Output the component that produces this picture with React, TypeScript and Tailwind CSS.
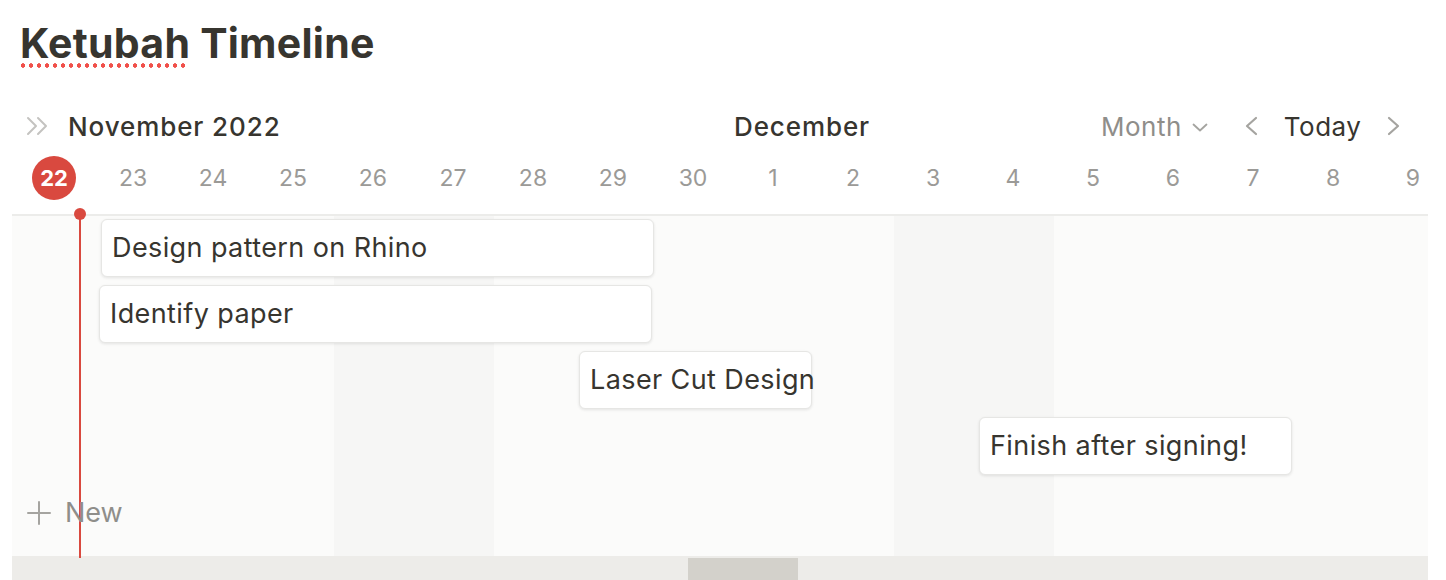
const days = ["22", "23", "24", "25", "26", "27", "28", "29", "30", "1", "2", "3", "4", "5", "6", "7", "8", "9"];

// columnas de fin de semana (26-27 nov, 3-4 dic)
const weekend = [4, 5, 11, 12];

type Task = { title: string; left: string; width: string };

const tasks: Task[] = [
  { title: "Design pattern on Rhino", left: "ml-[89px]", width: "w-[553px]" },
  { title: "Identify paper", left: "ml-[87px]", width: "w-[553px]" },
  { title: "Laser Cut Design", left: "ml-[567px]", width: "w-[233px]" },
  { title: "Finish after signing!", left: "ml-[967px]", width: "w-[313px]" },
];

function TaskCard({ task }: { task: Task }) {
  return (
    <div
      className={`${task.left} ${task.width} flex h-[58px] items-center overflow-visible whitespace-nowrap rounded-[6px] border border-[#e6e6e4] bg-white pl-[10px] text-[27px] tracking-[0.4px] text-[#37352f] shadow-[0_1px_3px_rgba(15,15,15,0.1)]`}
    >
      {task.title}
    </div>
  );
}

export default function App() {
  return (
    <div className="h-[580px] w-[1446px] overflow-hidden bg-white font-['Inter',sans-serif] text-[#37352f]">
      <div className="flex h-[100px] items-start pl-[20px] pt-[18px]">
        <h1 className="text-[41px] font-bold leading-[50px] tracking-[0.25px]">
          <span className="relative">
            Ketubah
            {/* subrayado del corrector ortográfico */}
            <span className="absolute left-[-1px] right-[3px] top-[45px] h-[5px] bg-[radial-gradient(circle,#f0504a_2px,transparent_2.4px)] bg-[length:8px_5px] bg-repeat-x" />
          </span>{" "}
          Timeline
        </h1>
      </div>

      {/* cabecera del mes */}
      <div className="flex h-[52px] items-center">
        <div className="flex w-[68px] shrink-0 items-center pl-[25px]">
          <svg width="26" height="20" viewBox="0 0 26 20" fill="none" stroke="#c4c3c0" strokeWidth="2" strokeLinecap="round" strokeLinejoin="round">
            <path d="M3 2l8 8-8 8M13 2l8 8-8 8" />
          </svg>
        </div>
        <span className="w-[666px] shrink-0 text-[26px] font-medium tracking-[0.9px]">November 2022</span>
        <span className="w-[367px] shrink-0 text-[26px] font-medium tracking-[0.9px]">December</span>
        <div className="flex items-center text-[26px] tracking-[0.5px] text-[#8f8e8a]">
          Month
          <svg className="ml-[10px] mt-[2px]" width="16" height="9" viewBox="0 0 16 9" fill="none" stroke="#a5a4a0" strokeWidth="1.8" strokeLinecap="round" strokeLinejoin="round">
            <path d="M1.5 1.5l6.5 6 6.5-6" />
          </svg>
        </div>
        <svg className="ml-[36px]" width="14" height="20" viewBox="0 0 14 20" fill="none" stroke="#a5a4a0" strokeWidth="2.2" strokeLinecap="round" strokeLinejoin="round">
          <path d="M12 2l-9 8 9 8" />
        </svg>
        <span className="ml-[26px] text-[26px] tracking-[0.5px]">Today</span>
        <svg className="ml-[26px]" width="14" height="20" viewBox="0 0 14 20" fill="none" stroke="#a5a4a0" strokeWidth="2.2" strokeLinecap="round" strokeLinejoin="round">
          <path d="M2 2l9 8-9 8" />
        </svg>
      </div>

      {/* fila de días */}
      <div className="ml-[13px] flex h-[62px] items-start pt-[4px]">
        {days.map((d, i) => (
          <div key={d + i} className="flex w-[80px] shrink-0 justify-center">
            {i === 0 ? (
              <span className="ml-[2px] flex h-[44px] w-[44px] items-center justify-center rounded-full bg-[#d9493f] text-[22px] font-bold text-white">
                {d}
              </span>
            ) : (
              <span className="flex h-[44px] items-center pt-[1px] text-[23px] text-[#9b9a97]">{d}</span>
            )}
          </div>
        ))}
      </div>

      {/* cuerpo del timeline */}
      <div className="relative ml-[12px] h-[342px] w-[1416px] border-t-2 border-[#ececea]">
        <div className="absolute inset-0 flex overflow-hidden">
          <div className="w-[2px] shrink-0 bg-[#fbfbfa]" />
          {days.map((d, i) => (
            <div
              key={d + i}
              className={`h-full w-[80px] shrink-0 ${weekend.includes(i) ? "bg-[#f6f6f5]" : "bg-[#fbfbfa]"}`}
            />
          ))}
        </div>

        <div className="absolute left-[67px] top-[-2px] h-[344px] w-[2px] bg-[#d9493f]" />
        <div className="absolute left-[62px] top-[-8px] h-[12px] w-[12px] rounded-full bg-[#d9493f]" />

        <div className="relative flex flex-col gap-[8px] pt-[3px]">
          {tasks.map((t) => (
            <TaskCard key={t.title} task={t} />
          ))}
        </div>

        <div className="relative mt-[18px] flex items-center pl-[14px] text-[27px] text-[#8f8e8a]">
          <svg width="26" height="26" viewBox="0 0 26 26" fill="none" stroke="#a5a4a0" strokeWidth="2" strokeLinecap="round">
            <path d="M13 2v22M2 13h22" />
          </svg>
          <span className="ml-[13px]">New</span>
        </div>
      </div>

      {/* barra de desplazamiento */}
      <div className="ml-[12px] flex h-[24px] w-[1416px] items-end bg-[#edece9]">
        <div className="ml-[676px] h-[22px] w-[110px] bg-[#d3d1cb]" />
      </div>
    </div>
  );
}
